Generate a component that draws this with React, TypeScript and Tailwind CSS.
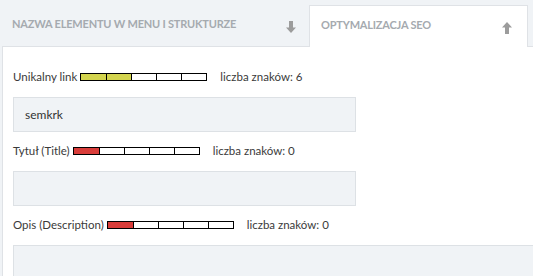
import React from 'react';

const ArrowDown = () => (
  <svg width="10" height="12" viewBox="0 0 10 12" className="text-[#9c9c9c]">
    <path d="M3 0h4v6.5h3l-5 5.5-5-5.5h3z" fill="currentColor" />
  </svg>
);

const ArrowUp = () => (
  <svg width="10" height="12" viewBox="0 0 10 12" className="text-[#9c9c9c]">
    <path d="M3 12h4V5.5h3L5 0 0 5.5h3z" fill="currentColor" />
  </svg>
);

const Meter = ({ filled, color }: { filled: number; color: string }) => (
  <div className="flex h-[8px] border border-black">
    {[0, 1, 2, 3, 4].map((i) => (
      <div
        key={i}
        className={`w-[25px] h-full ${i > 0 ? 'border-l border-black' : ''} ${i < filled ? color : 'bg-white'}`}
      />
    ))}
  </div>
);

const Field = ({
  label,
  filled,
  color,
  count,
  value,
  wide,
}: {
  label: string;
  filled: number;
  color: string;
  count: number;
  value?: string;
  wide?: boolean;
}) => (
  <div className="flex flex-col">
    <div className="flex items-center h-[20px] text-[11.5px] text-[#3a3a3a]">
      <span className="mr-[3px]">{label}</span>
      <Meter filled={filled} color={color} />
      <span className="ml-[13px]">liczba znaków: {count}</span>
    </div>
    <div
      className={`mt-[10px] h-[35px] bg-[#f0f3f6] border border-[#dde1e5] flex items-center pl-[11px] text-[12px] text-[#333] ${
        wide ? 'w-[calc(100%+12px)] border-r-0' : 'w-[343px]'
      }`}
    >
      {value}
    </div>
  </div>
);

export default function App() {
  return (
    <div
      className="w-[533px] h-[276px] overflow-hidden bg-[#f0f3f6] pl-[2px]"
      style={{ fontFamily: 'Lato, "Open Sans", sans-serif' }}
    >
      {/* Tabs */}
      <div className="flex items-end h-[46px] w-[600px]">
        <div className="w-[307px] h-[41px] flex items-center justify-between pl-[10px] pr-[13px] pb-[2px]">
          <span className="text-[11px] font-bold uppercase text-[#a5aaaf] tracking-[-0.2px]">
            Nazwa elementu w menu i strukturze
          </span>
          <span className="mt-[4px]">
            <ArrowDown />
          </span>
        </div>
        <div className="relative z-10 w-[219px] h-[42px] -mb-[1px] bg-white border border-b-0 border-[#dfe2e6] flex items-center justify-between pl-[11px] pr-[15px] pb-[2px]">
          <span className="text-[11px] font-bold uppercase text-[#a5aaaf] tracking-[-0.2px]">
            Optymalizacja SEO
          </span>
          <span className="mt-[4px]">
            <ArrowUp />
          </span>
        </div>
      </div>

      {/* Panel */}
      <div className="bg-white border-l border-t border-[#dfe2e6] w-[560px] h-[240px] pl-[10px] pt-[20px] flex flex-col gap-[9px]">
        <Field label="Unikalny link" filled={2} color="bg-[#d3d44e]" count={6} value="semkrk" />
        <Field label="Tytuł (Title)" filled={1} color="bg-[#d93d3a]" count={0} />
        <Field label="Opis (Description)" filled={1} color="bg-[#d93d3a]" count={0} wide />
      </div>
    </div>
  );
}
